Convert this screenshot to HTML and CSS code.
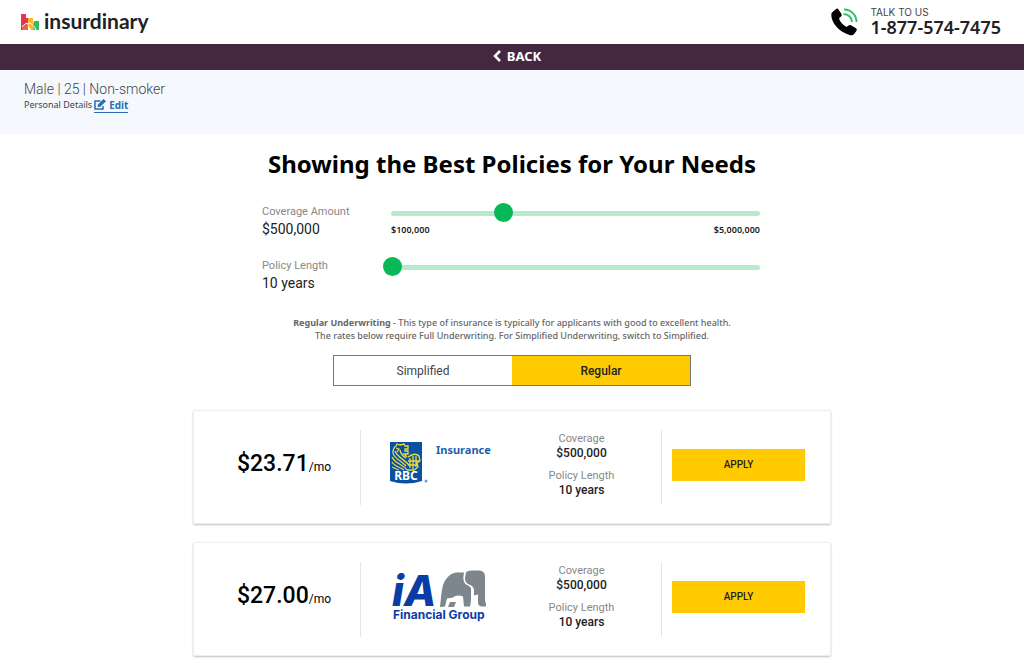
FILE: index.html
```html
<!DOCTYPE html>
<html lang="en">
<head>
    <meta charset="UTF-8">
    <title>Insurdinary - Life Insurance Quotes</title>
    <meta name="viewport" content="width=device-width, initial-scale=1.0">
    <link rel="stylesheet" href="styles.css">
</head>
<body>

<header class="header">
    <a class="logo" href="#">
        <svg width="19" height="16" viewBox="0 0 19 16" aria-hidden="true">
            <path d="M0 0h5v4h2v5l-2 3v4H0z" fill="#e8344e"/>
            <path d="M7 4h5v4l1 3v5h-3l-3-5z" fill="#fbb731"/>
            <path d="M13 7h5v9h-5l-1-4z" fill="#35b95e"/>
            <path d="M1 16c0-4 3-6 6-5v5z" fill="#f0643c"/>
            <path d="M1 13c4-6 11-5 14 3" fill="none" stroke="#fff" stroke-width="1"/>
        </svg>
        <span>insurdinary</span>
    </a>
    <a class="phone" href="tel:18775747475">
        <svg width="27" height="28" viewBox="0 0 27 28" aria-hidden="true">
            <path d="M1 4.500 5 1q1.500-1 2.500.500l3 4.500q.7 1.500-.5 2.500L8 10.500q1.500 5 7.500 8.500l2-1.500q1.200-1 2.500-.2l5 3q1.500 1 .5 2.500l-2.500 3.500q-1.500 1.300-4.500.6C8.500 24 0 15 .3 6.500q0-1.200.7-2z" fill="#000"/>
            <path d="M13 1.500c7 0 12.500 5.500 12.500 12.500M12.500 6c4.500 0 8.500 3.500 8.500 8" fill="none" stroke="#2fbf71" stroke-width="2"/>
        </svg>
        <span class="phone-text">
            <span class="phone-label">TALK TO US</span>
            <strong>1-877-574-7475</strong>
        </span>
    </a>
</header>

<nav class="back-bar">
    <a href="#">
        <svg width="8" height="12" viewBox="0 0 8 12" aria-hidden="true"><path d="M7 1 2 6l5 5" fill="none" stroke="#fff" stroke-width="2.500"/></svg>
        BACK
    </a>
</nav>

<section class="details">
    <div class="details-summary">Male | 25 | Non-smoker</div>
    <div class="details-edit">
        Personal Details
        <a href="#">
            <svg width="12" height="11" viewBox="0 0 12 11" aria-hidden="true">
                <path d="M6.500 2H1v8h8V7" fill="none" stroke="#2a6db0" stroke-width="1.500"/>
                <path d="M3.500 8 4 5.500 9.500 0 12 2.300 6.300 7.700z" fill="#2a6db0"/>
            </svg>
            Edit
        </a>
    </div>
</section>

<main class="main">
    <h1>Showing the Best Policies for Your Needs</h1>

    <form class="filters">
        <div class="filter">
            <label for="coverage">Coverage Amount <output>$500,000</output></label>
            <div class="slider">
                <input type="range" id="coverage" min="0" max="19" value="6">
                <div class="slider-limits"><span>$100,000</span><span>$5,000,000</span></div>
            </div>
        </div>
        <div class="filter">
            <label for="length">Policy Length <output>10 years</output></label>
            <div class="slider">
                <input type="range" id="length" min="10" max="40" value="10">
            </div>
        </div>
    </form>

    <p class="note">
        <strong>Regular Underwriting</strong> - This type of insurance is typically for applicants with good to excellent health.<br>
        The rates below require Full Underwriting. For Simplified Underwriting, switch to Simplified.
    </p>

    <div class="toggle">
        <button type="button">Simplified</button>
        <button type="button" class="active">Regular</button>
    </div>

    <article class="policy">
        <div class="price">$23.71<small>/mo</small></div>
        <div class="insurer">
            <svg width="102" height="44" viewBox="0 0 102 44" role="img" aria-label="RBC Insurance">
                <path d="M0 0h32v39q-16 5-32 0z" fill="#0b51a1"/>
                <g fill="none" stroke="#e9dc45" stroke-width="1.300">
                    <path d="M3 11q0-5 3-7l1-2 3 1 4-1 1 2h3v3h-3v2h3v3h-4l3 3"/>
                    <path d="M6 6l3 1-2 3M3 11c1 6 9 8 13 13M5 9c2 6 10 9 14 14M2 15c3 7 11 7 15 13M2 20c3 5 8 5 12 8M2 25q4 2 7 3M10 8q1 5 6 8"/>
                    <path d="M18 15q7-5 11-1l1 5-3 2 1 4-4 3h-7M20 16v10M23 14v13M26 14v11M18 19h11M18 23h9"/>
                </g>
                <text class="rbc-text" x="16" y="38" text-anchor="middle">RBC</text>
                <circle cx="36" cy="39" r="1.500" fill="#6f9dcd"/>
                <text class="rbc-insurance" x="46" y="12">Insurance</text>
            </svg>
        </div>
        <dl class="terms">
            <dt>Coverage</dt><dd>$500,000</dd>
            <dt>Policy Length</dt><dd>10 years</dd>
        </dl>
        <div class="action"><button type="button">APPLY</button></div>
    </article>

    <article class="policy">
        <div class="price">$27.00<small>/mo</small></div>
        <div class="insurer">
            <svg width="102" height="56" viewBox="-4 -2 102 56" role="img" aria-label="iA Financial Group">
                <text class="ia-text" x="-2" y="36">iA</text>
                <path d="M46 37c1-8 1-14 3-22C52 7 57 3 63 2.500h7c-1 5-1 8 1 11 2 2 5 2 6 5v6c0 4 0 8-1 12h-6l-1-10c-4-2-8-1-10 1l-6 1-2 8z" fill="#7c868c"/>
                <path d="M56 32h6l-2 5h-6z" fill="#7c868c"/>
                <path d="M72 2q3-2 7-1.500h7q5 1 5 6v23q0 3 1 4v3h-4q-4 0-4-5v-7l-4 1v-6q-1-4-5-5-4-2-4-6z" fill="#7c868c"/>
                <text class="ia-group" x="-1" y="49">Financial Group</text>
            </svg>
        </div>
        <dl class="terms">
            <dt>Coverage</dt><dd>$500,000</dd>
            <dt>Policy Length</dt><dd>10 years</dd>
        </dl>
        <div class="action"><button type="button">APPLY</button></div>
    </article>
</main>

</body>
</html>
```
FILE: styles.css
```css
* {
    box-sizing: border-box;
}
body {
    margin: 0;
    font-family: "Noto Sans", "Open Sans", sans-serif;
    font-size: 12px;
    line-height: 16px;
    color: #222;
    background: #fff;
}
a {
    color: inherit;
    text-decoration: none;
}
button {
    font-family: Roboto, sans-serif;
    border: none;
    border-radius: 0;
    padding: 0;
    cursor: pointer;
}

/* header */
.header {
    display: flex;
    justify-content: space-between;
    align-items: center;
    height: 44px;
    padding: 0 23px 0 21px;
}
.logo {
    display: flex;
    align-items: center;
    gap: 4px;
    font-family: Lato, sans-serif;
    font-size: 21px;
    line-height: 24px;
    font-weight: bold;
}
.logo span {
    padding-bottom: 2px;
}
.phone {
    display: flex;
    align-items: center;
    gap: 12px;
}
.phone-text {
    display: flex;
    flex-direction: column;
    padding-bottom: 2px;
}
.phone-label {
    font-family: Inter, sans-serif;
    font-size: 10px;
    line-height: 12px;
    color: #444;
}
.phone strong {
    font-size: 18px;
    line-height: 18px;
    font-weight: 600;
}
.back-bar {
    background: #44283f;
    text-align: center;
    padding: 2px 0 4px 10px;
}
.back-bar a {
    display: inline-flex;
    align-items: center;
    gap: 6px;
    font-size: 13px;
    line-height: 20px;
    font-weight: bold;
    color: #fff;
}
.details {
    min-height: 64px;
    padding: 11px 24px;
    background: #f5f9fd;
    color: #444;
}
.details-summary {
    font-family: Roboto, sans-serif;
    font-size: 14px;
    font-weight: 300;
}
.details-edit {
    display: flex;
    gap: 2px;
    font-size: 9px;
}
.details-edit a {
    display: flex;
    align-items: center;
    gap: 3px;
    height: 16px;
    border-bottom: 1px solid #2a6db0;
    font-size: 10px;
    font-weight: bold;
    color: #2a6db0;
}

/* filters */
.main {
    max-width: 638px;
    margin: 0 auto;
    padding: 14px 0;
}
h1 {
    margin: 0;
    font-size: 24px;
    line-height: 32px;
    text-align: center;
    color: #000;
}
.filters {
    display: flex;
    flex-direction: column;
    gap: 20px;
    padding: 24px 71px 0 69px;
}
.filter {
    display: flex;
}
.filter label {
    flex: 0 0 129px;
    font-family: Roboto, sans-serif;
    font-size: 11px;
    color: #888;
}
.filter output {
    display: block;
    font-size: 14px;
    line-height: 18px;
    color: #222;
}
.slider {
    flex: 1;
}
.slider input {
    -webkit-appearance: none;
    appearance: none;
    display: block;
    width: 100%;
    height: 18px;
    margin: 0;
    background: none;
}
.slider input::-webkit-slider-runnable-track {
    height: 5px;
    border-radius: 3px;
    background: #b5ebcb;
}
.slider input::-webkit-slider-thumb {
    -webkit-appearance: none;
    width: 19px;
    height: 19px;
    margin: -8px 0 0 -8px;
    border-radius: 50%;
    background: #06b856;
}
.slider-limits {
    display: flex;
    justify-content: space-between;
    font-size: 9px;
    font-weight: 600;
}
.note {
    margin: 24px 0 13px;
    font-size: 9px;
    line-height: 13px;
    font-weight: 500;
    text-align: center;
    color: #666;
}
.toggle {
    display: flex;
    width: 358px;
    margin: 0 auto;
    border: 1px solid #777;
}
.toggle button {
    flex: 1;
    height: 29px;
    font-size: 12px;
    color: #444;
    background: #fff;
}
.toggle .active {
    font-weight: 500;
    color: #222;
    background: #ffcb00;
}

/* policy cards */
.policy {
    display: grid;
    grid-template-columns: 149px 1fr 140px 143px;
    align-items: center;
    margin-top: 18px;
    padding: 19px 25px 18px 18px;
    border: 1px solid #eee;
    border-radius: 2px;
    box-shadow: 0 1px 2px rgba(0, 0, 0, 0.25);
    font-family: Roboto, sans-serif;
}
.toggle + .policy {
    margin-top: 24px;
}
.price {
    height: 75px;
    padding-right: 4px;
    border-right: 1px solid #e5e5e5;
    font-size: 23px;
    line-height: 68px;
    font-weight: 500;
    text-align: center;
    color: #000;
}
.price small {
    font-size: 12px;
    font-weight: normal;
}
.insurer {
    padding: 0 0 8px 29px;
}
.insurer svg {
    display: block;
    overflow: visible;
}
.rbc-text {
    font: bold 12px "Noto Sans", sans-serif;
    fill: #fff;
}
.rbc-insurance {
    font: bold 11px "Noto Sans", sans-serif;
    fill: #1d5fae;
}
.ia-text {
    font: italic 800 42px Inter, sans-serif;
    fill: #0a3ca6;
}
.ia-group {
    font: 700 12px Inter, sans-serif;
    fill: #0a3ca6;
}
.terms {
    height: 75px;
    margin: 0;
    border-right: 1px solid #e5e5e5;
    padding: 1px 20px 0 0;
    line-height: 15px;
    text-align: center;
}
.terms dt {
    font-size: 11px;
    color: #888;
}
.terms dd {
    margin: 0 0 7px;
    font-weight: 500;
}
.action {
    padding: 0 0 6px 10px;
}
.action button {
    width: 100%;
    height: 32px;
    font-size: 10px;
    font-weight: 500;
    color: #222;
    background: #ffcb00;
}
```
